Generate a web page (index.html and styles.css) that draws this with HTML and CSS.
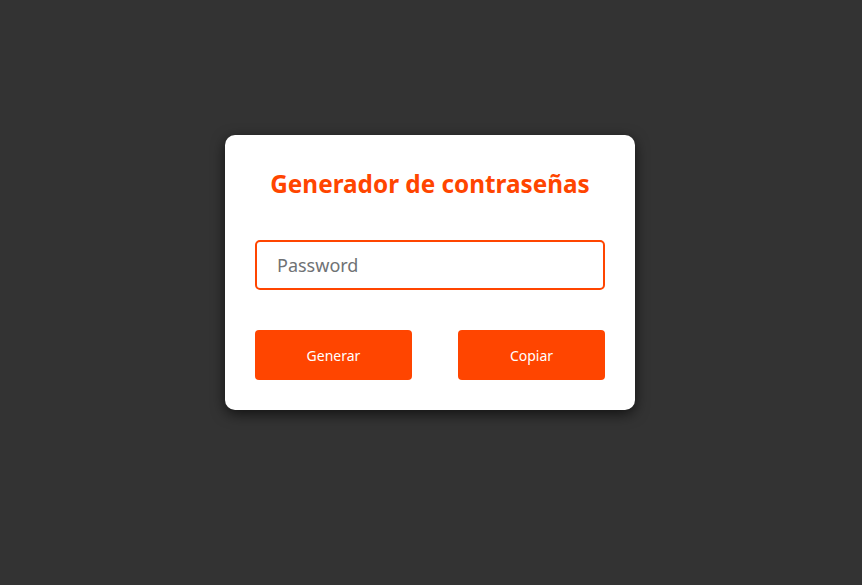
FILE: index.html
```html
<!DOCTYPE html>
<html lang="es">
<head>
<meta charset="utf-8">
<title>Generador de contraseñas</title>
<link rel="stylesheet" href="styles.css">
</head>
<body>
<main class="card">
  <h2 class="title">Generador de contraseñas</h2>
  <input class="field" type="text" placeholder="Password">
  <div class="actions">
    <button class="btn btn-gen">Generar</button>
    <button class="btn btn-copy">Copiar</button>
  </div>
</main>
</body>
</html>
```
FILE: styles.css
```css
html, body {
  margin: 0;
  height: 100%;
}
body {
  background: #333333;
  font-family: "Noto Sans", "Open Sans", "Liberation Sans", sans-serif;
  display: flex;
  justify-content: center;
  align-items: flex-start;
  padding: 135px 2px 0 0;
  box-sizing: border-box;
}
.card {
  width: 410px;
  box-sizing: border-box;
  background: #ffffff;
  border-radius: 10px;
  padding: 30px;
  box-shadow: 0 4px 14px rgba(0, 0, 0, 0.65);
  display: flex;
  flex-direction: column;
}
.title {
  margin: 0;
  height: 34px;
  line-height: 34px;
  text-align: center;
  color: #ff4500;
  font-size: 24.3px;
  font-weight: 700;
  margin-top: 2px;
}
.field {
  margin-top: 39px;
  height: 50px;
  box-sizing: border-box;
  border: 2px solid #ff4500;
  border-radius: 5px;
  padding: 0 20px;
  font-family: inherit;
  font-size: 18px;
  color: #333;
  outline: none;
}
.field::placeholder {
  color: #6f7275;
}
.actions {
  margin-top: 40px;
  display: flex;
  justify-content: space-between;
}
.btn {
  height: 50px;
  border: none;
  border-radius: 4px;
  background: #ff4500;
  color: #ffffff;
  font-family: inherit;
  font-size: 14px;
  cursor: pointer;
}
.btn-gen { width: 157px; }
.btn-copy { width: 147px; }
```
